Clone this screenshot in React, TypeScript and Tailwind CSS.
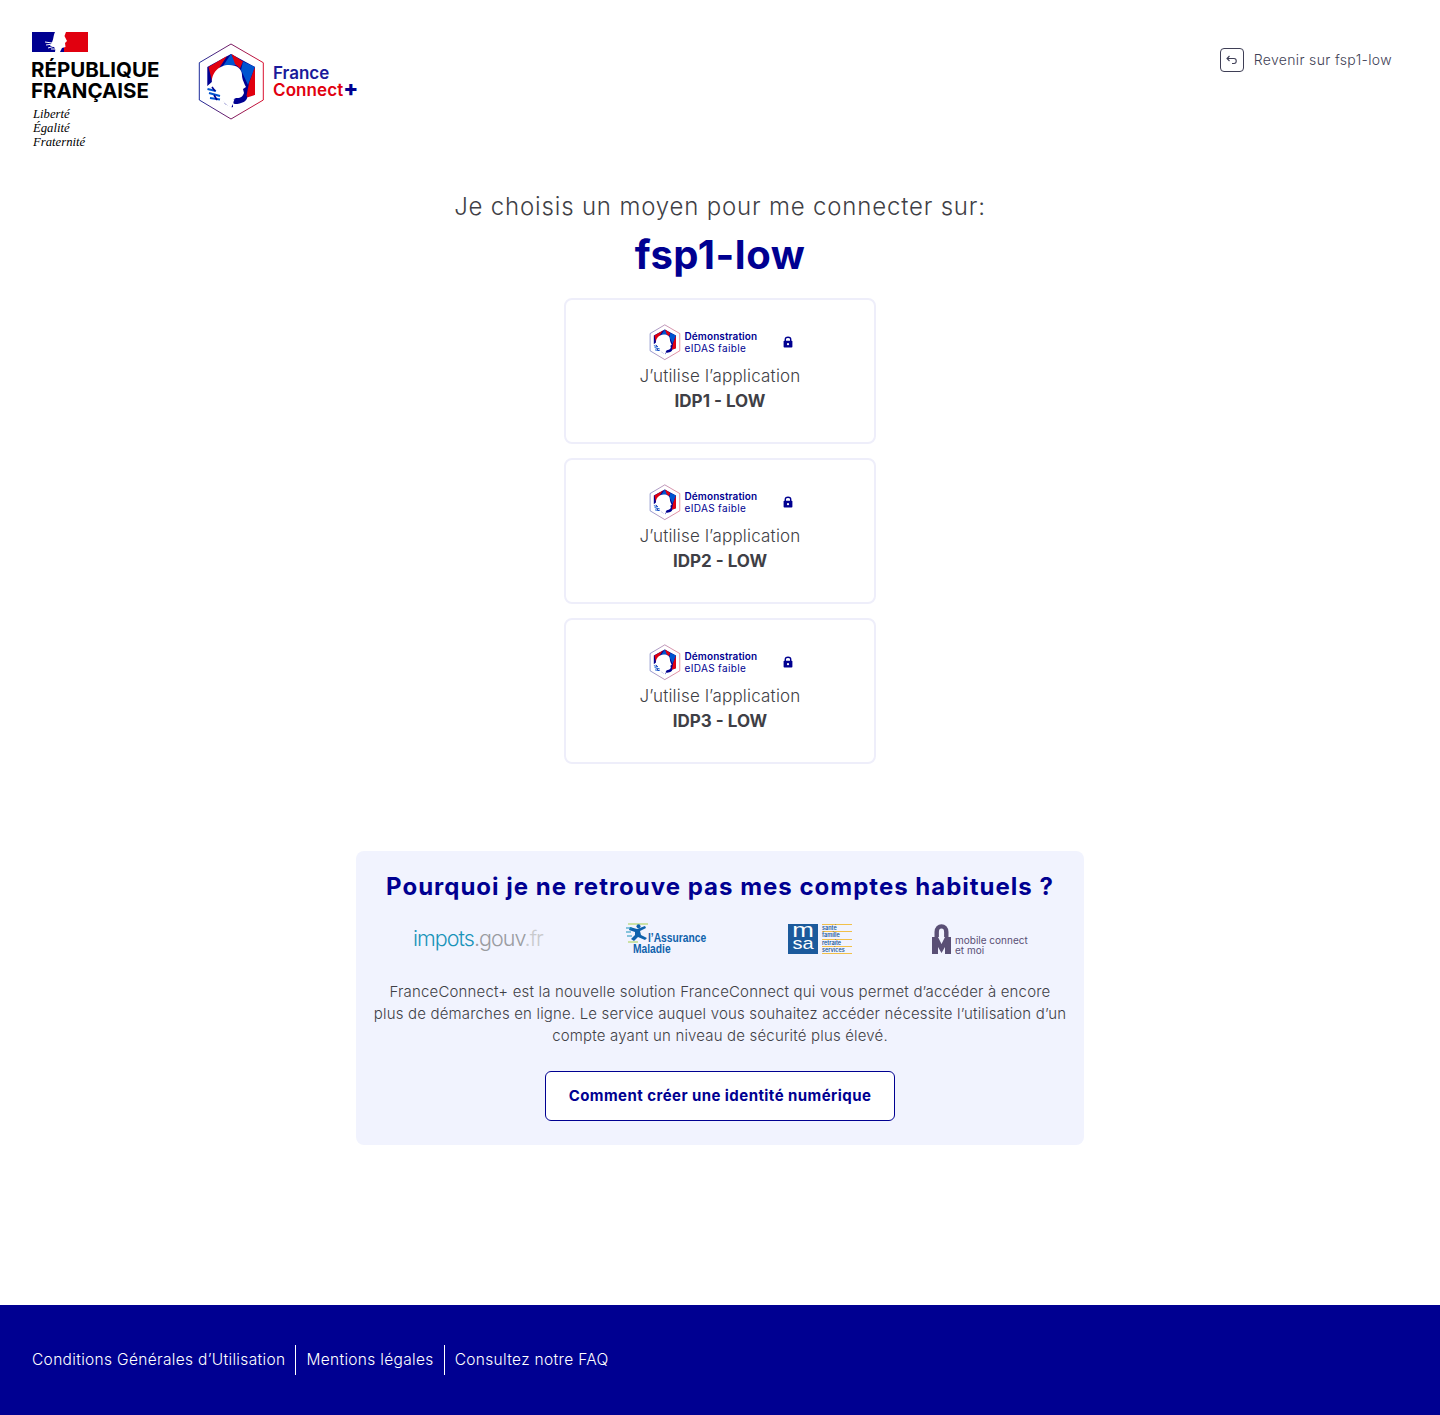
const font = { fontFamily: '"Inter", "Noto Sans", sans-serif' }

const FcHex = ({ className }: { className: string }) => (
    <svg viewBox="0 0 75 82" className={className}>
        <defs>
            <linearGradient id="hexStroke" x1="0" y1="0" x2="1" y2="0">
                <stop offset="0" stopColor="#1a2a9a" />
                <stop offset="1" stopColor="#d9102e" />
            </linearGradient>
        </defs>
        <polygon points="36,14 60,27 60,55 36,68 12.3,55 12.3,27" fill="#000091" />
        <polygon points="13.5,27 32,16 21,33 17,41" fill="#e1000f" />
        <polygon points="36,14 28,26 42,25" fill="#0055d0" />
        <polygon points="36.5,14 48,21.5 45,28.5 40,24" fill="#e1000f" />
        <polygon points="48,21.5 60,27 53,45 46,30" fill="#0055d0" />
        <polygon points="60,27 60,55 51,58.5 54,43" fill="#e1000f" />
        {/* everything under the profile stays white, only the shoulder is dark */}
        <path d="M12.3,46 L18,41 L30,64 L38,68 L38,82 L0,82 L0,46 Z" fill="#fff" />
        <path d="M38,60 L52,57.5 L60,55 L60,82 L38,82 Z" fill="#fff" />
        <path d="M38.5,63.5 C38,59.5 41,58 45,57.5 C48,57 50,57 52,56 C53,59 50,62 46,63 C43,64 41,64.5 38.5,63.5 Z" fill="#000091" />
        <path d="M17,43 C16,33 24,25 34,25 C42,25 47,29 47,35 C47,38 48,41 51,47 L48,49 L49,53 C48,56 46,58 42,58 C39,58 38,60 38,64 L36,68 C26,62 20,52 17,43 Z" fill="#fff" />
        <path d="M12.5,49 L21,51 M14,53 L25,56 M15,58 L25,59.5" stroke="#0055d0" strokeWidth="2" />
        <path d="M17,47 L20,51 M19,55 L22,60" stroke="#000091" strokeWidth="1.6" />
        <polygon points="36,4 68.3,22.7 68.3,60 36,79 4.3,60 4.3,22.7" fill="none" stroke="url(#hexStroke)" strokeWidth="1" />
    </svg>
)

const Flag = () => (
    <svg viewBox="0 0 56 20" className="block w-[56px] h-[20px]">
        <rect width="56" height="20" fill="#000091" />
        <rect x="32" width="24" height="20" fill="#e1000f" />
        <path d="M23,0 H34 L32.5,4 L35,9 L33,11 L33.5,15 L30,16 L28,20 H23 C24,16 22,14 18,14 C22,8 21,4 23,0 Z" fill="#fff" />
        <path d="M13,10 L20,11 M14,13 L21,12 M16,16 L23,14 M19,17 L23,17" stroke="#fff" strokeWidth="1" />
    </svg>
)

const Lock = () => (
    <svg viewBox="0 0 10 12" className="w-[10px] h-[12px]">
        <path d="M2.3,5 V3.2 C2.3,0.5 7.7,0.5 7.7,3.2 V5" fill="none" stroke="#000091" strokeWidth="1.4" />
        <rect x="0.6" y="4.8" width="8.8" height="6.8" rx="0.8" fill="#000091" />
        <circle cx="5" cy="8.2" r="1.1" fill="#fff" />
    </svg>
)

const IdpCard = ({ name }: { name: string }) => (
    <button className="w-[312px] h-[146px] bg-white border-2 border-[#eeeefa] rounded-lg pt-[23px] flex flex-col items-center cursor-pointer">
        <div className="w-[145px] h-[38px] flex items-center justify-between">
            <div className="flex items-center">
                <FcHex className="w-[35px] h-[38px]" />
                <div className="ml-[2px] flex flex-col text-left text-[#000091]">
                    <span className="text-[10px] leading-[12px] font-semibold tracking-[0.1px]">Démonstration</span>
                    <span className="text-[10px] leading-[12px] tracking-[0.35px]">eIDAS faible</span>
                </div>
            </div>
            <Lock />
        </div>
        <div className="mt-[3px] text-[17px] leading-[25px] font-light text-[#3f3f46] tracking-[0.2px]">J’utilise l’application</div>
        <div className="text-[17px] leading-[25px] font-bold text-[#3f3f46]">{name}</div>
    </button>
)

const ImpotsLogo = () => (
    <div className="w-[130px] text-[21.5px] leading-none font-light tracking-[-0.97px] whitespace-nowrap">
        <span className="text-[#1b93b9]">impots</span>
        <span className="text-[#9a9ca1]">.gouv</span>
        <span className="text-[#c9cacd]">.fr</span>
    </div>
)

const AssuranceLogo = () => (
    <div className="ml-[82px] w-[81px] h-[32px] flex flex-col relative" style={{ fontFamily: '"Liberation Sans", sans-serif' }}>
        <svg viewBox="0 0 24 20" className="absolute left-0 top-0 w-[24px] h-[20px]">
            <path d="M3,1 H23 M3,19 H13" stroke="#a6cf4f" strokeWidth="1" />
            <path d="M5,4 L12,6 L20,3 L21,5 L15,8 L16,12 L22,15 L20,17 L13,14 L9,18 L6,16 L10,12 L10,9 L4,7 Z" fill="#0f62ac" />
            <path d="M1,5 H7 M1,9 H6 M2,13 H7" stroke="#1b93b9" strokeWidth="1.2" />
            <circle cx="13.5" cy="3.2" r="2" fill="#0f62ac" />
        </svg>
        <span className="ml-[23px] mt-[9px] text-[12.5px] leading-[12px] font-bold text-[#0f62ac] whitespace-nowrap origin-left scale-x-[0.82]">l’Assurance</span>
        <span className="ml-[8px] text-[12.5px] leading-[11px] font-bold text-[#0f62ac] origin-left scale-x-[0.82]">Maladie</span>
    </div>
)

const MsaLogo = () => (
    <div className="ml-[82px] w-[64px] h-[30px] flex">
        <div className="w-[30px] h-[30px] bg-[#1c5a9c] flex flex-col items-center text-white" style={{ fontFamily: '"Liberation Sans", sans-serif' }}>
            <span className="text-[26px] leading-[14px] origin-top scale-y-[0.8]">m</span>
            <span className="text-[20px] leading-[14px] origin-top scale-y-[0.8]">sa</span>
        </div>
        <div className="ml-[4px] flex-1 flex flex-col text-[5.5px] leading-[6.5px] font-semibold text-[#1c5a9c] border-t border-[#f1c04a]">
            <span className="border-b border-[#f1c04a] h-[7.25px]">santé</span>
            <span className="border-b border-[#f1c04a] h-[7.25px]">famille</span>
            <span className="border-b border-[#f1c04a] h-[7.25px]">retraite</span>
            <span className="border-b border-[#f1c04a] h-[7.25px]">services</span>
        </div>
    </div>
)

const MobileConnectLogo = () => (
    <div className="ml-[80px] w-[96px] h-[30px] flex items-end text-[#5a4f75]">
        <svg viewBox="0 0 19 30" className="w-[19px] h-[30px]">
            <path d="M4.7,13 V8 C4.7,0.5 14.3,0.5 14.3,8 V13" fill="none" stroke="#5a4f75" strokeWidth="4.4" />
            <path d="M0,13 H6 L9.5,20 L13,13 H19 V30 H13 V23 L9.5,29 L6,23 V30 H0 Z" fill="#5a4f75" />
        </svg>
        <div className="ml-[4px] mb-[-1px] text-[10px] leading-[10px] whitespace-nowrap">
            <div>mobile connect</div>
            <div>et moi</div>
        </div>
    </div>
)

const App = () => {
    return (
        <div className="min-h-screen flex flex-col bg-white" style={font}>
            <header className="flex justify-between items-start pt-8 pl-8 pr-12">
                <div className="flex items-start">
                    <div className="w-[163px] text-black">
                        <Flag />
                        <div className="mt-[7px] -ml-[1px] text-[20.5px] leading-[21px] font-bold">
                            <div>RÉPUBLIQUE</div>
                            <div>FRANÇAISE</div>
                        </div>
                        <div className="mt-[6px] pl-[1px] text-[12.7px] leading-[14px] italic" style={{ fontFamily: '"Liberation Serif", serif' }}>
                            <div>Liberté</div>
                            <div>Égalité</div>
                            <div>Fraternité</div>
                        </div>
                    </div>
                    <div className="flex items-center mt-[8px]">
                        <FcHex className="w-[75px] h-[82px]" />
                        <div className="ml-[3px] pt-[1px] text-[17px] leading-[15px] font-semibold">
                            <div className="text-[#1a1a9a]">France</div>
                            <div className="text-[#e1000f] whitespace-nowrap tracking-[0.1px]">Connect<span className="text-[#000091] text-[22px] leading-[15px] font-extrabold">+</span></div>
                        </div>
                    </div>
                </div>
                <a className="mt-4 flex items-center text-[14px] font-light text-[#3f3f56]">
                    <span className="w-[24px] h-[24px] border border-[#3f3f56] rounded-[4px] flex items-center justify-center">
                        <svg viewBox="0 0 14 14" className="w-[14px] h-[14px]" fill="none" stroke="#3f3f56" strokeWidth="1.1">
                            <path d="M4.5,3 L2,5.5 L4.5,8 M2,5.5 H9 C12,5.5 12,10.5 9,10.5 H7" />
                        </svg>
                    </span>
                    <span className="ml-[10px] -mt-[2px] tracking-[0.35px]">Revenir sur fsp1-low</span>
                </a>
            </header>

            <main className="flex flex-col items-center">
                <h1 className="mt-[40px] text-[24px] leading-[36px] font-light text-[#3f3f46] tracking-[0.82px]">Je choisis un moyen pour me connecter sur:</h1>
                <h2 className="mt-[6px] text-[40px] leading-[48px] font-bold text-[#000091] tracking-[0.55px]">fsp1-low</h2>
                <div className="mt-[19px] flex flex-col gap-[14px]">
                    <IdpCard name="IDP1 - LOW" />
                    <IdpCard name="IDP2 - LOW" />
                    <IdpCard name="IDP3 - LOW" />
                </div>
                <section className="mt-[87px] w-[728px] h-[294px] rounded-lg bg-[#f1f3fe] flex flex-col items-center pt-[18px]">
                    <h3 className="text-[24px] leading-[36px] font-bold text-[#000091] whitespace-nowrap tracking-[1px]">Pourquoi je ne retrouve pas mes comptes habituels ?</h3>
                    <div className="mt-[18px] w-full h-[32px] pl-[57px] flex items-center">
                        <ImpotsLogo />
                        <AssuranceLogo />
                        <MsaLogo />
                        <MobileConnectLogo />
                    </div>
                    <p className="mt-[26px] w-[693px] text-center text-[15px] leading-[22px] font-light text-[#3f3f46] tracking-[0.17px]">
                        FranceConnect+ est la nouvelle solution FranceConnect qui vous permet d’accéder à encore plus de démarches en ligne. Le service auquel vous souhaitez accéder nécessite l’utilisation d’un compte ayant un niveau de sécurité plus élevé.
                    </p>
                    <button className="mt-[24px] w-[350px] h-[50px] bg-white border border-[#000091] rounded-md text-[15px] font-bold text-[#000091] tracking-[0.44px]">Comment créer une identité numérique</button>
                </section>
            </main>

            <footer className="mt-auto h-[110px] bg-[#000091] flex items-center pl-8 text-white text-[15.5px] font-light tracking-[0.33px]">
                <a className="h-[30px] flex items-center pr-[10px] border-r border-white">Conditions Générales d’Utilisation</a>
                <a className="h-[30px] flex items-center pl-[10px] pr-[10px] border-r border-white">Mentions légales</a>
                <a className="h-[30px] flex items-center pl-[10px]">Consultez notre FAQ</a>
            </footer>
        </div>
    )
}

export default App
